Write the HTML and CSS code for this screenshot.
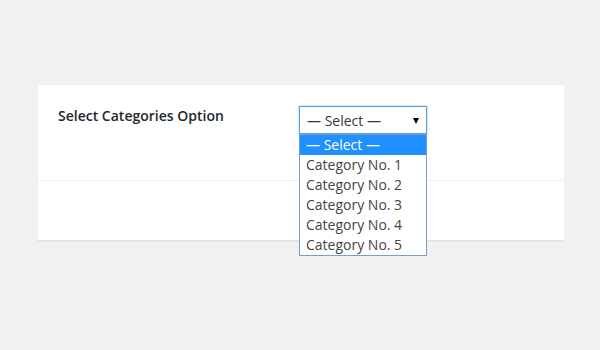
FILE: index.html
```html
<!DOCTYPE html>
<html>
<head>
<meta charset="utf-8">
<link rel="stylesheet" href="styles.css">
</head>
<body>
<div class="page">
  <div class="card">
    <div class="row">
      <div class="label">Select Categories Option</div>
      <div class="field">
        <div class="select">
          <span>— Select —</span>
          <span class="arrow"></span>
        </div>
        <ul class="list">
          <li class="active">— Select —</li>
          <li>Category No. 1</li>
          <li>Category No. 2</li>
          <li>Category No. 3</li>
          <li>Category No. 4</li>
          <li>Category No. 5</li>
        </ul>
      </div>
    </div>
    <div class="footer"></div>
  </div>
</div>
</body>
</html>
```
FILE: styles.css
```css
* { box-sizing: border-box; }
html, body { margin: 0; padding: 0; }
body {
  background: #f1f1f1;
  font-family: "Open Sans", "Liberation Sans", sans-serif;
  width: 600px;
  height: 350px;
  overflow: hidden;
}
.page {
  padding: 85px 0 0 38px;
}
.card {
  width: 526px;
  background: #fff;
  border-bottom: 1px solid #e2e2e2;
  box-shadow: 0 1px 1px rgba(0,0,0,0.04);
}
.row {
  display: flex;
  height: 96px;
  padding: 21px 0 0 20px;
  border-bottom: 1px solid #eeeeee;
}
.label {
  width: 241px;
  font-size: 14px;
  font-weight: 600;
  color: #23282d;
  line-height: 18px;
  padding-top: 1px;
}
.field {
  position: relative;
}
.select {
  width: 128px;
  height: 28px;
  border: 1px solid #5b9dd9;
  box-shadow: 0 0 2px rgba(30,140,190,0.5);
  display: flex;
  align-items: center;
  justify-content: space-between;
  padding: 0 7px 0 7px;
  font-size: 14px;
  color: #32373c;
}
.arrow {
  width: 0;
  height: 0;
  border-left: 3px solid transparent;
  border-right: 3px solid transparent;
  border-top: 6px solid #000;
  margin-top: 1px;
}
.list {
  position: absolute;
  top: 28px;
  left: 0;
  width: 128px;
  margin: 0;
  padding: 0;
  list-style: none;
  background: #fff;
  border: 1px solid #7a9ccf;
}
.list li {
  height: 20px;
  line-height: 20px;
  padding-left: 6px;
  font-size: 14px;
  color: #444;
}
.list li.active {
  background: #1e90ff;
  color: #fff;
}
.footer {
  height: 59px;
}
```
